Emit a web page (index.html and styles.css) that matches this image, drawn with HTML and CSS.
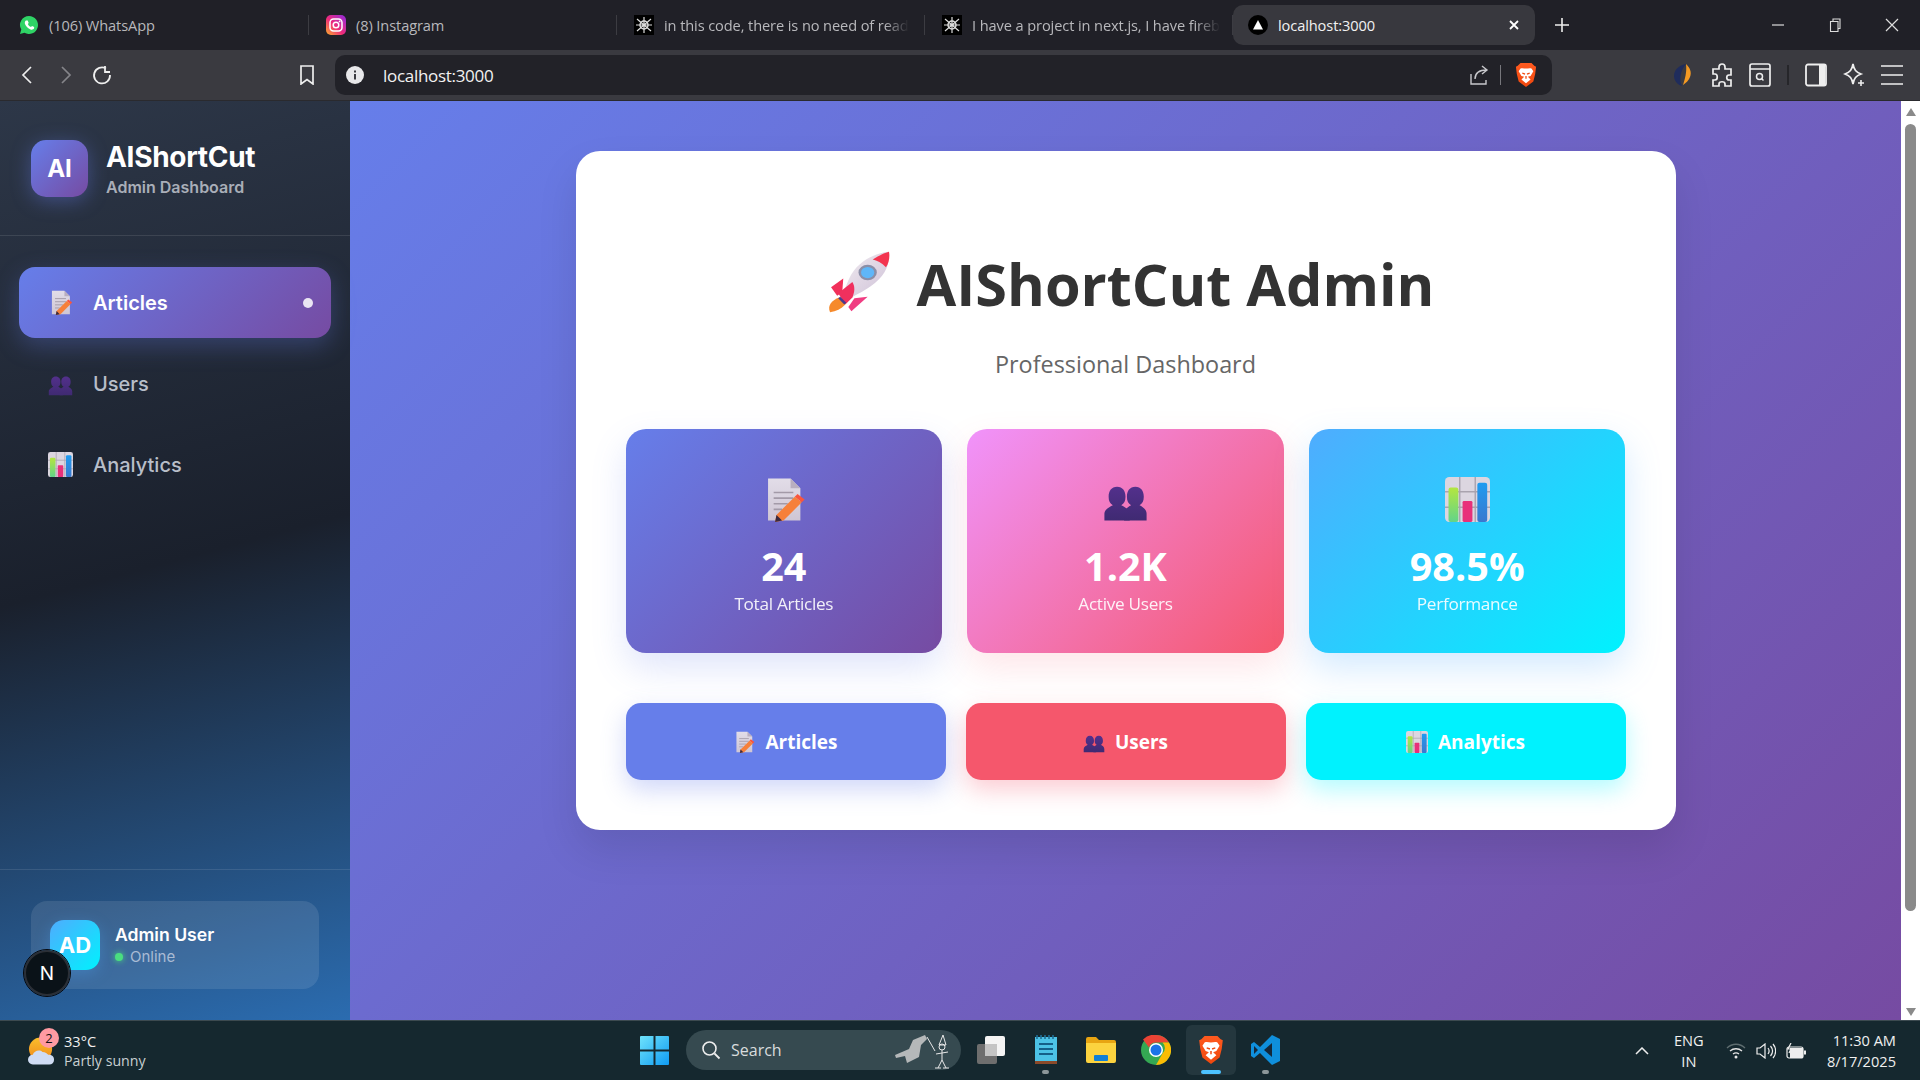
FILE: index.html
```html
<!DOCTYPE html>
<html lang="en">

<head>
    <meta charset="UTF-8">
    <meta name="viewport" content="width=device-width, initial-scale=1.0">
    <title>AIShortCut Admin</title>
    <link rel="stylesheet" href="styles.css">
</head>

<body>
    <!-- shared icons -->
    <svg class="sprite" width="0" height="0">
        <defs>
            <linearGradient id="gPage" x1="0" y1="0" x2="0" y2="1"><stop offset="0" stop-color="#e2dde8"/><stop offset="1" stop-color="#cfc6d4"/></linearGradient>
            <linearGradient id="gPerson" x1="0" y1="0" x2="0" y2="1"><stop offset="0" stop-color="#53308c"/><stop offset="1" stop-color="#3f2a72"/></linearGradient>
            <linearGradient id="gGreen" x1="0" y1="0" x2="0" y2="1"><stop offset="0" stop-color="#b4e63f"/><stop offset="1" stop-color="#62d48a"/></linearGradient>
            <linearGradient id="gBlue" x1="0" y1="0" x2="0" y2="1"><stop offset="0" stop-color="#1f9cf0"/><stop offset="1" stop-color="#3a78cf"/></linearGradient>
            <linearGradient id="gBody" x1="0" y1="0" x2="1" y2="1"><stop offset="0" stop-color="#f3eef2"/><stop offset="1" stop-color="#cdbfd6"/></linearGradient>
            <linearGradient id="gInsta" x1="0" y1="1" x2="1" y2="0"><stop offset="0" stop-color="#fdb02a"/><stop offset=".45" stop-color="#ee2a7b"/><stop offset="1" stop-color="#8f2be0"/></linearGradient>
            <linearGradient id="gWin" x1="0" y1="0" x2="1" y2="1"><stop offset="0" stop-color="#6fe3fb"/><stop offset="1" stop-color="#0f9bf2"/></linearGradient>
            <linearGradient id="gSun" x1="0" y1="0" x2="0" y2="1"><stop offset="0" stop-color="#fbbf2c"/><stop offset="1" stop-color="#f08a1c"/></linearGradient>
            <linearGradient id="gBrave" x1="0" y1="0" x2="0" y2="1"><stop offset="0" stop-color="#ff5a1f"/><stop offset="1" stop-color="#f0480e"/></linearGradient>

            <symbol id="i-memo" viewBox="0 0 32 32">
                <path d="M5 1h16l7 7v23H5z" fill="url(#gPage)"/>
                <path d="M21 1l7 7h-7z" fill="#b9aebf"/>
                <path d="M9 11h14M9 15h14M9 19h10M9 23h6" stroke="#a39aa8" stroke-width="1.2"/>
                <path d="M11 27l13-13 5 4-13 13-6 1z" fill="#f6803a"/>
                <path d="M24 14l2-2 5 4-2 2z" fill="#f9553e"/>
                <path d="M10 32l1-5 4 4z" fill="#3b2a3f"/>
            </symbol>
            <symbol id="i-users" viewBox="0 -6 32 32">
                <path d="M1 25v-5c0-3 4-5 6-6-2-1-3-3-3-6 0-4 2-7 6-7s6 3 6 7c0 3-1 5-3 6 2 1 6 3 6 6v5z" fill="url(#gPerson)"/>
                <path d="M15 25v-5c0-3 3-5 5-6-2-1-3-3-3-6 0-4 2-7 6-7s6 3 6 7c0 3-1 5-3 6 2 1 5 3 5 6v5z" fill="url(#gPerson)"/>
            </symbol>
            <symbol id="i-chart" viewBox="0 0 32 32">
                <rect width="32" height="32" rx="3" fill="#dcd6e0"/>
                <path d="M10.500 0v32M21.500 0v32M0 10.500h32M0 21.500h32" stroke="#aaa3ae" stroke-width="1"/>
                <rect x="2.500" y="7.500" width="7" height="24.500" rx="1.500" fill="url(#gGreen)"/>
                <rect x="12.500" y="17" width="7" height="15" rx="1" fill="#e8307a"/>
                <rect x="23" y="4" width="7" height="28" rx="1.500" fill="url(#gBlue)"/>
            </symbol>
            <symbol id="i-rocket" viewBox="0 0 62 72" preserveAspectRatio="none">
                <path d="M3 71c-3-8 2-14 9-17l6 8c-4 5-9 8-15 9z" fill="#f68a2c"/>
                <path d="M4 42l12-10-1 16-5 4z" fill="#f1305a"/>
                <path d="M24 70l16-17-13 2-6 10z" fill="#f03d82"/>
                <path d="M13 53c6-10 6-15 11-26C32 12 45 3 61 1c1 17-5 29-18 40-8 7-14 9-24 17z" fill="url(#gBody)"/>
                <path d="M61 1c1 6 0 13-3 18-4-5-9-8-13-9 5-4 10-7 16-9z" fill="#f3344f"/>
                <circle cx="40" cy="25" r="9" fill="#8b8fa8"/>
                <circle cx="40" cy="25" r="6.500" fill="#5fb6f8"/>
                <path d="M11 49l14-13c3 6 2 12 0 18l-7 8z" fill="#f0305e"/>
                <path d="M13 53l6 7-2 2-6-7z" fill="#4a3a8c"/>
            </symbol>
            <symbol id="i-spider" viewBox="0 0 20 20">
                <rect width="20" height="20" fill="#000"/>
                <circle cx="10" cy="10" r="4" fill="none" stroke="#ddd" stroke-width="1.500"/>
                <path d="M10 2v16M3 4l14 12M17 4L3 16M2 10h16" stroke="#ddd" stroke-width="1.200"/>
            </symbol>
            <symbol id="i-brave" viewBox="0 0 24 28">
                <path d="M6 1h12l3 3 2 1-1 8-2 8-8 6-8-6-2-8-1-8 2-1z" fill="url(#gBrave)"/>
                <path d="M12 7c-2 0-4-1-6 0l-2 3 3 5 3 1-3 3 5 4 5-4-3-3 3-1 3-5-2-3c-2-1-4 0-6 0z" fill="#fff"/>
                <path d="M8 12l3 1M16 12l-3 1M12 15v3" stroke="#f0480e" stroke-width="1.400"/>
            </symbol>
        </defs>
    </svg>

    <!-- browser tabs -->
    <div class="tabbar">
        <div class="tab">
            <svg class="tab-icon" viewBox="0 0 20 20"><path d="M10 1a9 9 0 0 0-7.700 13.600L1 19l4.500-1.200A9 9 0 1 0 10 1z" fill="#2fd366"/><path d="M7 5.500c-1 .5-1.500 2-1 3.500 1 2.500 3 4.500 5.500 5.500 1.500.5 3 0 3.500-1l.2-1.500-2.200-1-1 1c-1.500-.5-2.500-1.500-3.200-3l.9-1-1-2.400z" fill="#fff"/></svg>
            <span class="tab-title">(106) WhatsApp</span>
        </div>
        <div class="tab tab-insta">
            <svg class="tab-icon" viewBox="0 0 20 20"><rect width="20" height="20" rx="5" fill="url(#gInsta)"/><rect x="4" y="4" width="12" height="12" rx="3.500" fill="none" stroke="#fff" stroke-width="1.500"/><circle cx="10" cy="10" r="2.800" fill="none" stroke="#fff" stroke-width="1.500"/><circle cx="13.600" cy="6.400" r=".9" fill="#fff"/></svg>
            <span class="tab-title">(8) Instagram</span>
        </div>
        <div class="tab tab-chat">
            <svg class="tab-icon"><use href="#i-spider"/></svg>
            <span class="tab-title fade">in this code, there is no need of read</span>
        </div>
        <div class="tab tab-chat">
            <svg class="tab-icon"><use href="#i-spider"/></svg>
            <span class="tab-title fade">I have a project in next.js, I have fireb</span>
        </div>
        <div class="tab tab-active">
            <svg class="tab-icon" viewBox="0 0 20 20"><circle cx="10" cy="10" r="10" fill="#000"/><path d="M10 5l5 9.500H5z" fill="#fff"/></svg>
            <span class="tab-title">localhost:3000</span>
            <svg class="tab-close" viewBox="0 0 10 10"><path d="M1 1l8 8M9 1l-8 8" stroke="#fff" stroke-width="1.800"/></svg>
        </div>
        <svg class="new-tab" viewBox="0 0 14 14"><path d="M7 0v14M0 7h14" stroke="#eee" stroke-width="1.600"/></svg>
        <div class="window-btns">
            <svg viewBox="0 0 14 14"><path d="M1 7h12" stroke="#ddd" stroke-width="1.200"/></svg>
            <svg viewBox="0 0 14 14"><path d="M2.500 3.500h7.500v10H2.500zM5 3.500V1h7v9.500h-2" fill="none" stroke="#ddd" stroke-width="1.100"/></svg>
            <svg viewBox="0 0 14 14"><path d="M1 1l12 12M13 1L1 13" stroke="#ddd" stroke-width="1.200"/></svg>
        </div>
    </div>

    <!-- browser toolbar -->
    <div class="toolbar">
        <div class="nav-btns">
            <svg viewBox="0 0 20 20"><path d="M13 2L5 10l8 8" fill="none" stroke="#eee" stroke-width="1.700"/></svg>
            <svg viewBox="0 0 20 20"><path d="M7 2l8 8-8 8" fill="none" stroke="#85858a" stroke-width="1.700"/></svg>
            <svg viewBox="0 0 20 20"><path d="M14 3.500a8 8 0 1 0 4 6.500M13 1v6h5" fill="none" stroke="#eee" stroke-width="1.800"/></svg>
        </div>
        <svg class="bookmark" viewBox="0 0 16 20"><path d="M2 1h12v18l-6-4.500L2 19z" fill="none" stroke="#eee" stroke-width="1.700"/></svg>
        <div class="urlbar">
            <svg class="info" viewBox="0 0 18 18"><circle cx="9" cy="9" r="9" fill="#e8e8ea"/><path d="M9 8v5.500M9 4.500v2" stroke="#28282e" stroke-width="1.800"/></svg>
            <span class="url-text">localhost:3000</span>
            <svg class="share" viewBox="0 0 20 20"><path d="M2 9v10h15v-4M6 14c0-6 4-9 12-9M13 1l5 4-5 4" fill="none" stroke="#c8c8cc" stroke-width="1.400"/></svg>
            <span class="url-divider"></span>
            <svg class="url-brave"><use href="#i-brave"/></svg>
        </div>
        <div class="tool-icons">
            <svg viewBox="0 0 20 24"><path d="M12 1c-7 1-12 6-12 12 0 5 4 9 8 10-3-6-2-15 4-22z" fill="#1f2c5c"/><path d="M12 1c4 4 6 8 4 13-1 3-4 6-7 8 2-6 4-13 3-21z" fill="#f59a23"/></svg>
            <svg viewBox="0 0 22 24"><path d="M8 4c0-4 6-4 6 0v2h6v6h-2c-3 0-3 5 0 5h2v6h-6v-2c0-3-6-3-6 0v2H2v-6h2c3 0 3-6 0-6H2V6h6z" fill="none" stroke="#eee" stroke-width="1.700"/></svg>
            <svg viewBox="0 0 22 24"><rect x="1" y="1" width="20" height="22" rx="2" fill="none" stroke="#eee" stroke-width="1.700"/><path d="M1 6h20" stroke="#eee" stroke-width="1.500"/><circle cx="10.500" cy="13.500" r="3" fill="none" stroke="#eee" stroke-width="1.500"/><path d="M12.500 15.500l2 2" stroke="#eee" stroke-width="1.500"/></svg>
            <span class="tool-divider"></span>
            <svg viewBox="0 0 22 24"><rect x="1" y="1.500" width="20" height="21" rx="2" fill="none" stroke="#eee" stroke-width="1.800"/><rect x="14" y="2" width="6" height="20" fill="#eee"/></svg>
            <svg viewBox="0 0 22 24"><path d="M10 1c1 6 3 8 8 10-5 2-7 4-8 10-1-6-3-8-8-10 5-2 7-4 8-10z" fill="none" stroke="#eee" stroke-width="1.700"/><path d="M18 17v6M15 20h6" stroke="#eee" stroke-width="1.600"/></svg>
            <svg viewBox="0 0 22 24"><path d="M0 3h22M0 12h22M0 21h22" stroke="#eee" stroke-width="1.700"/></svg>
        </div>
    </div>

    <div class="viewport">
        <!-- Sidebar -->
        <aside class="sidebar">
            <div class="brand">
                <div class="brand-logo">AI</div>
                <div>
                    <div class="brand-name">AIShortCut</div>
                    <div class="brand-sub">Admin Dashboard</div>
                </div>
            </div>
            <nav class="side-nav">
                <a class="nav-item active">
                    <svg class="nav-icon"><use href="#i-memo"/></svg>
                    <span>Articles</span>
                    <i class="nav-dot"></i>
                </a>
                <a class="nav-item">
                    <svg class="nav-icon"><use href="#i-users"/></svg>
                    <span>Users</span>
                </a>
                <a class="nav-item">
                    <svg class="nav-icon"><use href="#i-chart"/></svg>
                    <span>Analytics</span>
                </a>
            </nav>
            <div class="side-footer">
                <div class="user-card">
                    <div class="user-avatar">AD</div>
                    <div>
                        <div class="user-name">Admin User</div>
                        <div class="user-status"><i class="status-dot"></i>Online</div>
                    </div>
                </div>
            </div>
            <div class="next-badge">N</div>
        </aside>

        <!-- Main content -->
        <main class="content">
            <div class="panel">
                <h1 class="panel-title"><svg class="rocket"><use href="#i-rocket"/></svg>AIShortCut Admin</h1>
                <p class="panel-sub">Professional Dashboard</p>

                <div class="stats">
                    <div class="stat stat-purple">
                        <svg class="stat-icon"><use href="#i-memo"/></svg>
                        <div class="stat-value">24</div>
                        <div class="stat-label">Total Articles</div>
                    </div>
                    <div class="stat stat-pink">
                        <svg class="stat-icon"><use href="#i-users"/></svg>
                        <div class="stat-value">1.2K</div>
                        <div class="stat-label">Active Users</div>
                    </div>
                    <div class="stat stat-blue">
                        <svg class="stat-icon"><use href="#i-chart"/></svg>
                        <div class="stat-value">98.5%</div>
                        <div class="stat-label">Performance</div>
                    </div>
                </div>

                <div class="actions">
                    <button class="action action-blue"><svg><use href="#i-memo"/></svg>Articles</button>
                    <button class="action action-red"><svg><use href="#i-users"/></svg>Users</button>
                    <button class="action action-cyan"><svg><use href="#i-chart"/></svg>Analytics</button>
                </div>
            </div>
        </main>

        <div class="scrollbar">
            <svg viewBox="0 0 12 10"><path d="M6 1l5 8H1z" fill="#8a8a8a"/></svg>
            <div class="scroll-track"><div class="scroll-thumb"></div></div>
            <svg viewBox="0 0 12 10"><path d="M1 1h10L6 9z" fill="#8a8a8a"/></svg>
        </div>
    </div>

    <!-- Windows taskbar -->
    <footer class="taskbar">
        <div class="weather">
            <div class="weather-icon">
                <svg viewBox="0 0 28 30"><circle cx="13" cy="13" r="12" fill="url(#gSun)"/><path d="M5 29a5 5 0 0 1 0-10c1-4 7-6 10-3 3 0 5 2 6 3 4 0 6 2 6 5s-2 5-5 5z" fill="#cfdcf4"/></svg>
                <span class="weather-badge">2</span>
            </div>
            <div>
                <div class="weather-temp">33°C</div>
                <div class="weather-text">Partly sunny</div>
            </div>
        </div>

        <div class="task-center">
            <svg class="start" viewBox="0 0 29 29"><path d="M0 1a1 1 0 0 1 1-1h12.500v13.500H0zM15.500 0H28a1 1 0 0 1 1 1v12.500H15.500zM0 15.500h13.500V29H1a1 1 0 0 1-1-1zM15.500 15.500H29V28a1 1 0 0 1-1 1H15.500z" fill="url(#gWin)"/></svg>
            <div class="search">
                <svg class="search-icon" viewBox="0 0 20 20"><circle cx="8.500" cy="8.500" r="6.500" fill="none" stroke="#eee" stroke-width="1.600"/><path d="M13.500 13.500l5 5" stroke="#eee" stroke-width="1.800"/></svg>
                <span>Search</span>
                <svg class="search-art" viewBox="0 0 58 38">
                    <path d="M0 24l14-6 4-9 12-5 2 4-6 6-2 12-12 6-2-7-9 2z" fill="#b5b8b9"/>
                    <path d="M32 6l8 14M44 14l4-10 3 10z" stroke="#e8e8e8" fill="none" stroke-width="1"/>
                    <circle cx="47" cy="16" r="3" fill="none" stroke="#e8e8e8"/>
                    <path d="M47 19v10M41 23l12-2M43 37l4-8 4 8M40 37h6M48 37h6" stroke="#e8e8e8" fill="none" stroke-width="1"/>
                </svg>
            </div>
            <div class="task-app">
                <svg viewBox="0 0 30 30"><rect x="9" y="1" width="20" height="20" rx="2" fill="#f4f4f4"/><rect x="1" y="9" width="20" height="20" rx="2" fill="#6e6e6e"/><rect x="9" y="9" width="12" height="12" fill="#c4c4c4"/></svg>
            </div>
            <div class="task-app running">
                <svg viewBox="0 0 24 30"><rect x="1" y="2" width="22" height="26" fill="#4cc2e6"/><rect x="1" y="26" width="22" height="3" fill="#8a4a2a"/><path d="M3 0v4M7 0v4M11 0v4M15 0v4M19 0v4" stroke="#1f6f96" stroke-width="1.600"/><path d="M5 9h14M5 14h14M5 19h14" stroke="#155f88" stroke-width="2"/></svg>
            </div>
            <div class="task-app">
                <svg viewBox="0 0 30 26"><path d="M0 2a2 2 0 0 1 2-2h8l3 3h15a2 2 0 0 1 2 2v4H0z" fill="#e8a512"/><path d="M0 6h30v18a2 2 0 0 1-2 2H2a2 2 0 0 1-2-2z" fill="#fcd33f"/><rect x="8" y="18" width="14" height="6" rx="1" fill="#0f7fd6"/></svg>
            </div>
            <div class="task-app">
                <svg viewBox="0 0 30 30"><circle cx="15" cy="15" r="15" fill="#34a853"/><path d="M15 0a15 15 0 0 1 13 7.500H15a7.500 7.500 0 0 0-7 5L2 4.500A15 15 0 0 1 15 0z" fill="#ea4335"/><path d="M28 7.500A15 15 0 0 1 15 30l6.500-11.500a7.500 7.500 0 0 0 0-11z" fill="#fbbc04"/><circle cx="15" cy="15" r="7" fill="#fff"/><circle cx="15" cy="15" r="5.500" fill="#1a73e8"/></svg>
            </div>
            <div class="task-app current">
                <svg><use href="#i-brave"/></svg>
            </div>
            <div class="task-app running">
                <svg viewBox="0 0 30 30"><path d="M21 0l8 4v22l-8 4-12-12-6 5-3-2v-12l3-2 6 5z" fill="#0f8fdc"/><path d="M21 8l-8 7 8 7z" fill="#15283a"/><path d="M3 11l4 4-4 4z" fill="#15283a"/></svg>
            </div>
        </div>

        <div class="tray">
            <svg class="tray-chevron" viewBox="0 0 14 8"><path d="M1 7l6-6 6 6" fill="none" stroke="#eee" stroke-width="1.500"/></svg>
            <div class="tray-lang">ENG<br>IN</div>
            <svg class="tray-icon" viewBox="0 0 20 16"><path d="M1 5c5-5 13-5 18 0" fill="none" stroke="#5e6d70" stroke-width="1.300"/><path d="M4 8c3.500-3 8.500-3 12 0M7 11c2-1.500 4-1.500 6 0" fill="none" stroke="#e6e6e6" stroke-width="1.300"/><circle cx="10" cy="14" r="1.500" fill="#e6e6e6"/></svg>
            <svg class="tray-icon" viewBox="0 0 20 16"><path d="M1 5h3l5-4v14l-5-4H1z" fill="none" stroke="#eee" stroke-width="1.200"/><path d="M12 5c1.500 2 1.500 4 0 6M14.500 3c2.500 3 2.500 7 0 10M17 1c3.500 4 3.500 10 0 14" fill="none" stroke="#eee" stroke-width="1.200"/></svg>
            <svg class="tray-icon" viewBox="0 0 20 16"><rect x="1" y="4" width="16" height="11" rx="2" fill="none" stroke="#eee" stroke-width="1.200"/><rect x="4" y="5" width="13" height="10" fill="#eee"/><rect x="18" y="7.500" width="2" height="4" fill="#eee"/><path d="M5 0L2 6h3L3 10" fill="none" stroke="#eee" stroke-width="1.200"/></svg>
            <div class="tray-clock">11:30 AM<br>8/17/2025</div>
        </div>
    </footer>
</body>

</html>
```
FILE: styles.css
```css
* {
    box-sizing: border-box;
}

html, body {
    margin: 0;
    height: 100%;
    overflow: hidden;
}

body {
    width: 1920px;
    height: 1080px;
    display: flex;
    flex-direction: column;
    font-family: "Open Sans", "Noto Sans", sans-serif;
    background-color: #202027;
}

/* kept in the document (not display none) so its gradients resolve */
.sprite {
    position: absolute;
    width: 0;
    height: 0;
}

/* browser tabs */
.tabbar {
    height: 50px;
    flex-shrink: 0;
    display: flex;
    align-items: center;
    background-color: #202027;
    color: #b8b8bc;
    font-size: 14.6px;
}

.tab {
    width: 308px;
    height: 40px;
    display: flex;
    align-items: center;
    gap: 10px;
    padding-left: 19px;
    position: relative;
}

.tab:first-child {
    width: 309px;
}

.tab::after {
    content: "";
    position: absolute;
    right: 0;
    top: 10px;
    height: 20px;
    width: 1px;
    background-color: #3c3c42;
}

.tab-insta {
    padding-left: 17px;
}

.tab-chat {
    padding-left: 17px;
}

.tab-icon {
    width: 20px;
    height: 20px;
    flex-shrink: 0;
}

.tab-title {
    white-space: nowrap;
    letter-spacing: -0.1px;
}

.tab-title.fade {
    -webkit-mask-image: linear-gradient(90deg, #000 90%, transparent);
    mask-image: linear-gradient(90deg, #000 90%, transparent);
}

.tab-active {
    width: 302px;
    background-color: #38383e;
    border-radius: 10px;
    padding-left: 15px;
    color: #f2f2f2;
}

.tab-active::after {
    display: none;
}

.tab-close {
    width: 10px;
    height: 10px;
    margin-left: auto;
    margin-right: 16px;
}

.new-tab {
    width: 14px;
    height: 14px;
    margin-left: 20px;
}

.window-btns {
    margin-left: auto;
    display: flex;
    gap: 43px;
    padding-right: 21px;
}

.window-btns svg {
    width: 14px;
    height: 14px;
}

/* browser toolbar */
.toolbar {
    height: 51px;
    flex-shrink: 0;
    display: flex;
    align-items: center;
    background-color: #3a3a40;
    border-bottom: 1px solid #2a2a2e;
}

.nav-btns {
    display: flex;
    gap: 17px;
    padding-left: 18px;
}

.nav-btns svg {
    width: 20px;
    height: 20px;
}

.bookmark {
    width: 16px;
    height: 20px;
    margin-left: 187px;
}

.urlbar {
    width: 1217px;
    height: 40px;
    margin-left: 20px;
    display: flex;
    align-items: center;
    background-color: #222228;
    border-radius: 10px;
    padding: 0 15px 0 11px;
    color: #f2f2f2;
    font-size: 17px;
}

.info {
    width: 18px;
    height: 18px;
}

.url-text {
    margin-left: 19px;
    letter-spacing: -0.3px;
}

.share {
    width: 20px;
    height: 20px;
    margin-left: auto;
}

.url-divider {
    width: 1px;
    height: 20px;
    background-color: #77777c;
    margin: 0 14px 0 11px;
}

.url-brave {
    width: 22px;
    height: 26px;
}

.tool-icons {
    display: flex;
    align-items: center;
    gap: 16px;
    margin-left: 121px;
}

.tool-icons svg {
    width: 22px;
    height: 24px;
}

.tool-divider {
    width: 2px;
    height: 20px;
    background-color: #26262a;
}

/* page */
.viewport {
    flex: 1;
    min-height: 0;
    display: flex;
}

.sidebar {
    width: 350px;
    flex-shrink: 0;
    display: flex;
    flex-direction: column;
    position: relative;
    color: white;
    font-family: Inter, sans-serif;
    background: linear-gradient(165deg, #2d3748 0%, #1a202c 50%, #2b6cb0 100%);
}

.brand {
    height: 135px;
    display: flex;
    align-items: center;
    gap: 18px;
    padding: 0 31px;
    border-bottom: 1px solid rgba(255, 255, 255, 0.1);
}

.brand-logo {
    width: 57px;
    height: 57px;
    border-radius: 15px;
    background: linear-gradient(135deg, #667eea, #764ba2);
    box-shadow: 0 4px 20px rgba(102, 126, 234, 0.4);
    display: flex;
    justify-content: center;
    align-items: center;
    font-size: 24px;
    font-weight: 700;
}

.brand-name {
    font-size: 28px;
    font-weight: 700;
    line-height: 34px;
    letter-spacing: -0.3px;
    margin-top: 2px;
}

.brand-sub {
    font-size: 16px;
    font-weight: 600;
    line-height: 22px;
    margin-top: 2px;
    color: #a9aeb8;
}

.side-nav {
    flex: 1;
    display: flex;
    flex-direction: column;
    gap: 10px;
    padding: 31px 19px;
}

.nav-item {
    height: 71px;
    display: flex;
    align-items: center;
    gap: 20px;
    padding: 0 18px 0 29px;
    border-radius: 16px;
    font-size: 20px;
    font-weight: 500;
    color: #b8bec9;
}

.nav-item.active {
    color: white;
    font-weight: 600;
    background: linear-gradient(135deg, #667eea, #764ba2);
    box-shadow: 0 8px 25px rgba(102, 126, 234, 0.3);
}

.nav-icon {
    width: 25px;
    height: 25px;
    flex-shrink: 0;
}

.nav-dot {
    width: 10px;
    height: 10px;
    margin-left: auto;
    border-radius: 50%;
    background-color: rgba(255, 255, 255, 0.85);
}

.side-footer {
    padding: 31px;
    height: 151px;
    border-top: 1px solid rgba(255, 255, 255, 0.1);
}

.user-card {
    height: 88px;
    display: flex;
    align-items: center;
    gap: 15px;
    padding: 0 19px;
    border-radius: 16px;
    background-color: rgba(255, 255, 255, 0.1);
}

.user-avatar {
    width: 50px;
    height: 50px;
    border-radius: 14px;
    background: linear-gradient(135deg, #4facfe, #00f2fe);
    box-shadow: 0 4px 15px rgba(79, 172, 254, 0.3);
    display: flex;
    justify-content: center;
    align-items: center;
    font-size: 22px;
    font-weight: 700;
}

.user-name {
    font-size: 17.6px;
    font-weight: 600;
    line-height: 24px;
}

.user-status {
    display: flex;
    align-items: center;
    gap: 7px;
    font-size: 15px;
    line-height: 20px;
    color: #a9bbd4;
}

.status-dot {
    width: 8px;
    height: 8px;
    border-radius: 50%;
    background-color: #4ade80;
    box-shadow: 0 0 6px #4ade80;
}

/* dev tools badge sits over the sidebar */
.next-badge {
    position: absolute;
    left: 24px;
    bottom: 24px;
    width: 46px;
    height: 46px;
    border-radius: 50%;
    background-color: #0a1218;
    border: 2px solid #2b2f36;
    outline: 1px solid #06080c;
    display: flex;
    justify-content: center;
    align-items: center;
    font-size: 19px;
    font-weight: 400;
}

.content {
    flex: 1;
    min-width: 0;
    padding-top: 50px;
    display: flex;
    justify-content: center;
    align-items: flex-start;
    background: linear-gradient(135deg, #667eea 0%, #764ba2 100%);
}

.panel {
    width: 1100px;
    height: 679px;
    padding: 50px;
    background-color: white;
    border-radius: 24px;
    box-shadow: 0 20px 40px rgba(0, 0, 0, 0.1);
    text-align: center;
    color: #333;
}

.panel-title {
    margin: 49px 0 0;
    height: 68px;
    display: flex;
    justify-content: center;
    align-items: center;
    gap: 27px;
    font-size: 57.6px;
    font-weight: 700;
    line-height: 68px;
}

.rocket {
    width: 63px;
    height: 62px;
    margin-left: 10px;
    margin-top: -4px;
}

.panel-sub {
    margin: 30px 0 0;
    font-size: 23.4px;
    line-height: 32px;
    color: #666;
}

.stats {
    margin-top: 49px;
    display: grid;
    grid-template-columns: repeat(3, 1fr);
    gap: 25px;
}

.stat {
    height: 224px;
    border-radius: 20px;
    padding-top: 48px;
    color: white;
}

.stat-purple {
    background: linear-gradient(135deg, #667eea, #764ba2);
    box-shadow: 0 15px 35px rgba(102, 126, 234, 0.2);
}

.stat-pink {
    background: linear-gradient(135deg, #f093fb, #f5576c);
    box-shadow: 0 15px 35px rgba(245, 87, 108, 0.15);
}

.stat-blue {
    background: linear-gradient(135deg, #4facfe, #00f2fe);
    box-shadow: 0 15px 35px rgba(79, 172, 254, 0.25);
}

.stat-icon {
    display: block;
    width: 45px;
    height: 45px;
    margin: 0 auto;
}

.stat-value {
    margin-top: 18px;
    font-size: 39.6px;
    font-weight: 700;
    line-height: 52px;
}

.stat-label {
    font-size: 17.2px;
    line-height: 24px;
    letter-spacing: -0.3px;
    opacity: 0.9;
}

.actions {
    margin-top: 50px;
    display: grid;
    grid-template-columns: repeat(3, 1fr);
    gap: 20px;
}

.action {
    height: 77px;
    padding-top: 2px;
    border: none;
    border-radius: 15px;
    color: white;
    font-family: inherit;
    font-size: 19px;
    font-weight: 700;
    display: flex;
    justify-content: center;
    align-items: center;
    gap: 10px;
}

.action svg {
    width: 22px;
    height: 22px;
}

.action-blue {
    background-color: #667eea;
    box-shadow: 0 10px 25px rgba(102, 126, 234, 0.3);
}

.action-red {
    background-color: #f5576c;
    box-shadow: 0 10px 25px rgba(245, 87, 108, 0.3);
}

.action-cyan {
    background-color: #00f2fe;
    box-shadow: 0 10px 25px rgba(0, 242, 254, 0.3);
}

.scrollbar {
    width: 19px;
    flex-shrink: 0;
    display: flex;
    flex-direction: column;
    align-items: center;
    padding: 6px 0 3px;
    background-color: white;
}

.scrollbar svg {
    width: 12px;
    height: 10px;
}

.scroll-track {
    flex: 1;
    width: 100%;
    padding: 7px 4px 0;
}

.scroll-thumb {
    height: 787px;
    border-radius: 6px;
    background-color: #8a8a8a;
}

/* taskbar */
.taskbar {
    height: 60px;
    flex-shrink: 0;
    position: relative;
    display: flex;
    justify-content: space-between;
    align-items: center;
    background-color: #15282f;
    border-top: 1px solid #3c4a50;
    color: #f0f0f0;
    font-size: 14.6px;
}

.weather {
    display: flex;
    align-items: center;
    gap: 9px;
    padding-left: 28px;
}

.weather-icon {
    width: 27px;
    height: 30px;
    position: relative;
}

.weather-icon svg {
    width: 27px;
    height: 30px;
    display: block;
}

.weather-badge {
    position: absolute;
    right: -4px;
    top: -8px;
    width: 20px;
    height: 20px;
    border-radius: 50%;
    background-color: #ff9aa2;
    color: #111;
    font-size: 13px;
    line-height: 20px;
    text-align: center;
}

.weather-temp {
    line-height: 20px;
}

.weather-text {
    font-size: 14.2px;
    line-height: 20px;
    color: #c8d0d2;
}

.task-center {
    position: absolute;
    left: 640px;
    top: 4px;
    height: 50px;
    display: flex;
    align-items: center;
}

.start {
    width: 29px;
    height: 29px;
}

.search {
    width: 275px;
    height: 40px;
    margin-left: 17px;
    margin-right: 2px;
    display: flex;
    align-items: center;
    gap: 10px;
    padding-left: 15px;
    border-radius: 20px;
    background-color: #364a50;
    font-size: 16px;
    color: #d8dcdd;
    position: relative;
}

.search-icon {
    width: 20px;
    height: 20px;
}

.search-art {
    position: absolute;
    right: 8px;
    top: 1px;
    width: 58px;
    height: 38px;
}

.task-app {
    width: 55px;
    height: 50px;
    display: flex;
    justify-content: center;
    align-items: center;
    position: relative;
    border-radius: 6px;
}

.task-app svg {
    width: 30px;
    height: 30px;
}

.task-app.running::after {
    content: "";
    position: absolute;
    left: 24px;
    bottom: 1px;
    width: 7px;
    height: 4px;
    border-radius: 2px;
    background-color: #8c9699;
}

.task-app.current {
    width: 50px;
    margin: 0 2.5px;
    background-color: #24373e;
}

.task-app.current::after {
    content: "";
    position: absolute;
    left: 15px;
    bottom: 1px;
    width: 20px;
    height: 4px;
    border-radius: 2px;
    background-color: #4cc2ff;
}

.tray {
    display: flex;
    align-items: center;
    padding-right: 24px;
}

.tray-chevron {
    width: 14px;
    height: 8px;
}

.tray-lang {
    width: 40px;
    margin-left: 20px;
    margin-right: 17px;
    text-align: center;
    line-height: 21px;
}

.tray-icon {
    width: 20px;
    height: 16px;
    margin-right: 10px;
}

.tray-clock {
    margin-left: 11px;
    text-align: right;
    line-height: 21px;
}
```
